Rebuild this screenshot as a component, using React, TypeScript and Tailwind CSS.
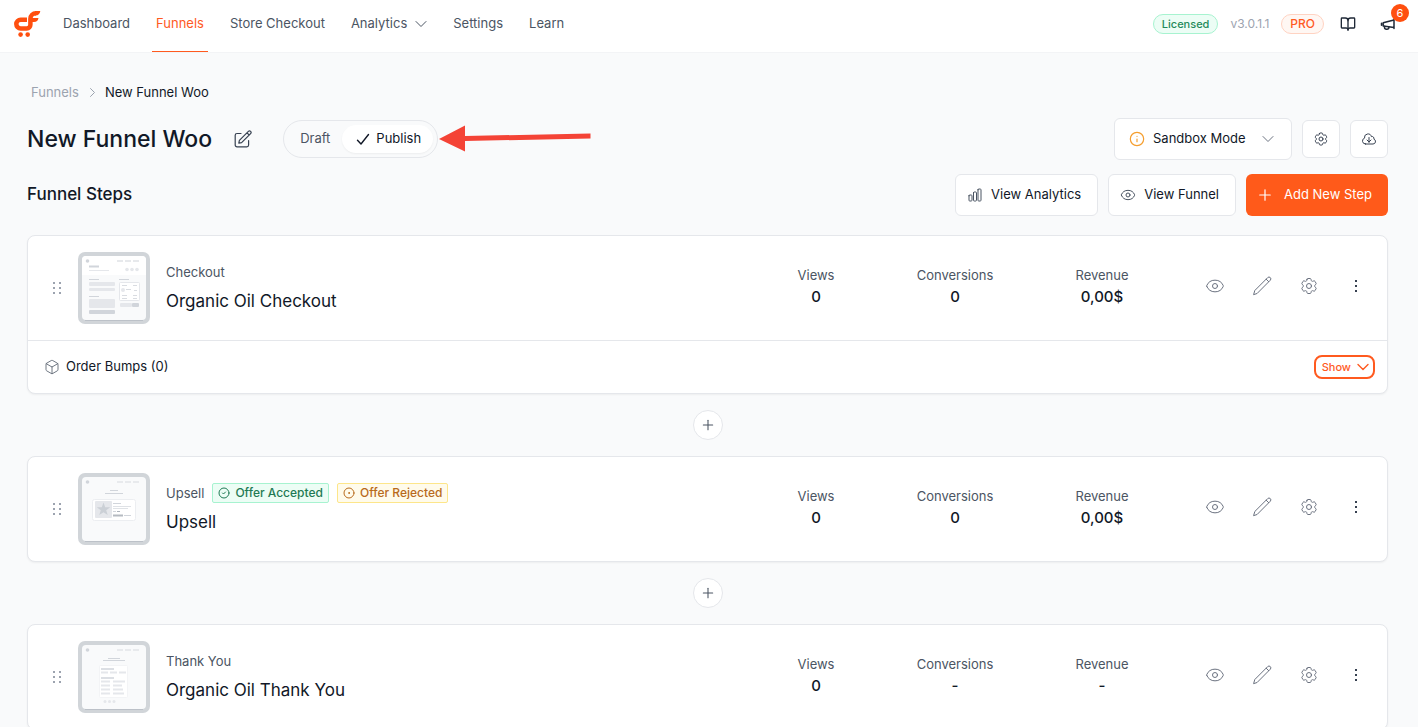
import { ReactNode, useState } from 'react'
import { BookOpen, Box, CircleCheck, CircleDot, Eye, Info, Plus } from 'lucide-react'
import { HiOutlineChartBar, HiOutlineCloudArrowDown, HiOutlineCog6Tooth } from 'react-icons/hi2'

type StepType = 'checkout' | 'upsell' | 'thankyou'

type Step = {
  type: StepType
  label: string
  title: string
  views: string
  conversions: string
  revenue: string
}

const steps: Step[] = [
  { type: 'checkout', label: 'Checkout', title: 'Organic Oil Checkout', views: '0', conversions: '0', revenue: '0,00$' },
  { type: 'upsell', label: 'Upsell', title: 'Upsell', views: '0', conversions: '0', revenue: '0,00$' },
  { type: 'thankyou', label: 'Thank You', title: 'Organic Oil Thank You', views: '0', conversions: '-', revenue: '-' },
]

const navItems = ['Dashboard', 'Funnels', 'Store Checkout', 'Analytics', 'Settings', 'Learn']

const Logo = () => (
  <svg width="28" height="28" viewBox="0 0 28 28" fill="none" aria-hidden="true">
    <path d="M14 9.800H7.600a4.300 4.300 0 0 0 0 8.600h6.200a3.600 3.600 0 0 0 3.600-3.600V8.800a5.600 5.600 0 0 1 5.600-5.600" stroke="#ff4f0f" strokeWidth="4.500" />
    <path d="M22 1h5.300c-.4 2.900-2 4.500-4.700 4.500H22zM17 8h8.500c-.4 2.700-1.900 4-4.500 4h-4z" fill="#ff4f0f" />
    <circle cx="7.600" cy="24.600" r="2.300" fill="#ff4f0f" />
    <circle cx="14.700" cy="24.600" r="2.300" fill="#ff4f0f" />
  </svg>
)

const Chevron = ({ className }: { className?: string }) => (
  <svg
    width="12"
    height="12"
    viewBox="0 0 12 12"
    fill="none"
    stroke="currentColor"
    strokeLinecap="round"
    strokeLinejoin="round"
    className={`pointer-events-none shrink-0 ${className ?? ''}`}
  >
    <path d="m1 3.500 5 5 5-5" />
  </svg>
)

const CheckIcon = () => (
  <svg width="14" height="14" viewBox="0 0 14 14" fill="none" stroke="currentColor" strokeWidth="1.400" strokeLinecap="round" strokeLinejoin="round">
    <path d="m1.500 8.200 3.500 3.800 7.500-9.500" />
  </svg>
)

const MegaphoneIcon = () => (
  <svg width="16" height="16" viewBox="0 0 16 16" fill="none" stroke="currentColor" strokeWidth="1.500" strokeLinejoin="round" strokeLinecap="round">
    <path d="M14 3v9.500M14 4 3.200 6.700v3.200L14 11.600M1.500 7.300v2" />
    <path d="M4.500 10.200v1.100a2 2 0 0 0 2 2h.4a2 2 0 0 0 2-2v-.4" />
  </svg>
)

const EditIcon = () => (
  <svg width="18" height="18" viewBox="0 0 18 18" fill="none" stroke="currentColor" strokeWidth="1.200" strokeLinejoin="round" strokeLinecap="round">
    <path d="M7 3.500H3A1.800 1.800 0 0 0 1.200 5.300V15A1.800 1.800 0 0 0 3 16.800h9.800a1.800 1.800 0 0 0 1.800-1.800v-4.500" />
    <path d="m4.800 13.200.6-2.800 9-9a1.500 1.500 0 0 1 2.200 2.200l-9 9zM13 2.800 15.200 5" />
  </svg>
)

const PencilIcon = () => (
  <svg width="20" height="20" viewBox="0 0 20 20" fill="none" stroke="currentColor" strokeLinejoin="round" strokeLinecap="round">
    <path d="m1.700 18.300 1.100-3.800L15.700 1.600a1.700 1.700 0 0 1 2.600 2.600L5.400 17.200zM14.200 3.200l2.500 2.500" />
  </svg>
)

const DragHandle = () => (
  <svg width="10" height="14" viewBox="0 0 10 14" fill="#9ca3af">
    {[1, 6, 11].map((y) => (
      <path key={y} d={`M1 ${y}h2v2H1zM7 ${y}h2v2H7z`} />
    ))}
  </svg>
)

const Thumbnail = ({ type }: { type: StepType }) => (
  <svg width="72" height="72" viewBox="0 0 72 72" aria-hidden="true" className="shrink-0">
    <rect width="72" height="72" rx="7" fill="#d1d5d9" />
    <rect x="4" y="4" width="64" height="64" rx="4" fill="#f9fafb" />
    <path d="M7 68.500h58" stroke="#bcc1c8" />
    <circle cx="9.500" cy="9" r="1.800" fill="#d1d5db" />
    <path d="M39 9h6M47 9h6M55 9h6" stroke="#e2e5e9" strokeWidth="1.500" />
    {type === 'checkout' && (
      <g>
        <path d="M4 8a4 4 0 0 1 4-4h56a4 4 0 0 1 4 4v15H4z" fill="#fff" />
        <circle cx="9.500" cy="9" r="1.800" fill="#d1d5db" />
        <path d="M39 9h6M47 9h6M55 9h6" stroke="#dfe2e6" strokeWidth="1.500" />
        <path d="M11 14.500h10" stroke="#d1d5db" strokeWidth="2" />
        <path d="M11 18.500h20" stroke="#e5e7eb" strokeWidth="1" />
        <g fill="#e5e7eb">
          <circle cx="49" cy="17.500" r="1.800" />
          <circle cx="54" cy="17.500" r="1.800" />
          <circle cx="59" cy="17.500" r="1.800" />
          <rect x="11" y="30" width="26" height="4" rx="1" />
          <rect x="11" y="36" width="26" height="3" rx="1" />
          <rect x="11" y="47" width="26" height="9" rx="1" />
          <rect x="42" y="51" width="12" height="4" rx="1" />
        </g>
        <rect x="11" y="58" width="26" height="4" rx="1" fill="#d1d5db" />
        <rect x="54" y="51" width="7" height="4" rx="1" fill="#d1d5db" />
        <path d="M11 27.500h10M41 27.500h10M11 44.500h10" stroke="#d1d5db" />
        <rect x="41.500" y="30.500" width="20" height="18" rx="1" fill="#fff" stroke="#e5e7eb" />
        <circle cx="45" cy="38" r="2" fill="#e5e7eb" />
        <path d="M44 33.500h5M55 33.500h4M48 37.500h5M56 38.500h3M44 43.500h5M55 43.500h4M44 46.500h5M55 46.500h4" stroke="#d9dce1" />
      </g>
    )}
    {type === 'upsell' && (
      <g>
        <path d="M32 17.500h8M27 20.500h18" stroke="#d1d5db" />
        <rect x="14.500" y="26.500" width="43" height="21" rx="2" fill="#fff" stroke="#eceef1" />
        <rect x="17" y="28" width="17" height="17" rx="1" fill="#e5e7eb" />
        <path d="m25.500 29.500 1.700 4.700 5 .1-4 3 1.500 4.800-4.200-2.900-4.200 2.900 1.500-4.800-4-3 5-.1z" fill="#cbd0d6" />
        <path d="M35 30.500h8M35 38.500h3M46 42.500h7" stroke="#d1d5db" />
        <path d="M35 33.500h18M35 35.500h15" stroke="#dfe2e6" />
        <path d="M39 38.500h3" stroke="#aeb4bc" />
        <path d="M35 42.500h10" stroke="#b5bac1" strokeWidth="2" />
      </g>
    )}
    {type === 'thankyou' && (
      <g>
        <path d="M30 17.500h12M25 19.500h22" stroke="#d1d5db" />
        <rect x="21.500" y="24.500" width="28" height="32" rx="1" fill="#fff" stroke="#f3f4f6" />
        <path d="M23 28h13M23 37h13" stroke="#d1d5db" strokeWidth="1.500" />
        <path
          d="M23 31.500h7M32 31.500h7M41 31.500h7M23 40.500h9M35 40.500h12M23 44.500h9M35 44.500h9M23 48.500h9M35 48.500h10M23 52.500h9M35 52.500h11"
          stroke="#e5e7eb"
          strokeWidth="2"
        />
        <circle cx="27" cy="60.500" r="1.500" fill="#e5e7eb" />
        <circle cx="31.500" cy="60.500" r="1.500" fill="#e5e7eb" />
        <circle cx="36" cy="60.500" r="1.500" fill="#e5e7eb" />
      </g>
    )}
  </svg>
)

const Header = () => (
  <header className="flex h-[53px] items-stretch border-b border-gray-100 bg-white pr-[22px] pl-[13px]">
    <a href="#" aria-label="Home" className="mr-[18px] flex items-center pb-1">
      <Logo />
    </a>
    <nav className="flex gap-[18px] text-[13px] text-[#4b5563]">
      {navItems.map((item) => (
        <a
          key={item}
          href="#"
          className={
            item === 'Funnels'
              ? 'flex items-center border-b border-[#ff5a1f] px-1 pb-1 text-[#ff5a1f]'
              : 'flex items-center gap-2 px-1 pb-1'
          }
        >
          {item}
          {item === 'Analytics' && <Chevron />}
        </a>
      ))}
    </nav>
    <div className="ml-auto flex items-center pb-1 text-xs">
      <span className="rounded-full border border-[#a7f3d0] bg-[#ecfdf5] px-2 text-[11px] leading-[18px] font-medium text-[#1f8a5b]">Licensed</span>
      <span className="ml-3 text-[#9ca3af]">v3.0.1.1</span>
      <span className="ml-3 rounded-full border border-[#ffd3c2] bg-[#fff7f3] px-2 leading-[18px] font-medium text-[#ff5a1f]">PRO</span>
      <button aria-label="Documentation" className="ml-4 text-[#1f2937]">
        <BookOpen size={16} strokeWidth={2} />
      </button>
      <button aria-label="What's new" className="relative ml-6 text-[#1f2937]">
        <MegaphoneIcon />
        <span className="absolute -top-3 left-[11px] flex size-[18px] items-center justify-center rounded-full bg-[#ff4f0f] text-[11px] text-white">
          6
        </span>
      </button>
    </div>
  </header>
)

const StatusToggle = () => {
  const [status, setStatus] = useState('Publish')

  return (
    <div className="ml-[31px] flex h-[38px] items-center rounded-full border border-gray-200 p-1 text-[13px]">
      {['Draft', 'Publish'].map((name) => (
        <button
          key={name}
          aria-pressed={status === name}
          onClick={() => setStatus(name)}
          className={
            status === name
              ? 'flex h-7 items-center gap-[6px] rounded-full bg-white pr-3 pl-[14px] text-[#111827] shadow-xs'
              : 'flex h-7 items-center px-3 text-[#4b5563]'
          }
        >
          {status === name && <CheckIcon />}
          {name}
        </button>
      ))}
    </div>
  )
}

const PointerArrow = () => (
  <svg width="153" height="32" viewBox="0 0 153 32" fill="#f44336" aria-hidden="true" className="ml-px">
    <path d="M0 16 26 2.500v10.500l125.500-2.500v5L26 18v10.500z" />
  </svg>
)

const Stat = ({ label, value, className }: { label: string; value: string; className: string }) => (
  <div className={`text-center ${className}`}>
    <div className="text-[13px] leading-[22px] whitespace-nowrap text-[#4b5563]">{label}</div>
    <div className="text-[15px] leading-[22px] font-medium text-[#111827]">{value}</div>
  </div>
)

const StepCard = ({ step, children }: { step: Step; children?: ReactNode }) => (
  <div className="w-full rounded-lg border border-gray-200 bg-white shadow-xs">
    <div className="flex items-center py-4 pr-[21px] pl-6">
      <button aria-label="Reorder step" className="mr-4">
        <DragHandle />
      </button>
      <Thumbnail type={step.type} />
      <div className="ml-4 flex flex-col gap-[5px]">
        <div className="flex items-center gap-2 text-[13px] leading-5 text-[#4b5563]">
          {step.label}
          {step.type === 'upsell' && (
            <>
              <span className="flex items-center gap-[5px] rounded-xs border border-[#a7f3d0] bg-[#ecfdf5] px-[5px] text-xs leading-[18px] font-medium text-[#1f7a54]">
                <CircleCheck size={12} /> Offer Accepted
              </span>
              <span className="flex items-center gap-[5px] rounded-xs border border-[#fde68a] bg-[#fffbeb] px-[5px] text-xs leading-[18px] font-medium text-[#b86a1c]">
                <CircleDot size={12} /> Offer Rejected
              </span>
            </>
          )}
        </div>
        <h3 className="text-[17px] leading-7 text-[#111827]">{step.title}</h3>
      </div>
      <div className="ml-auto flex items-center pb-1">
        <div className="flex gap-[79px]">
          <Stat label="Views" value={step.views} className="w-10" />
          <Stat label="Conversions" value={step.conversions} className="w-20" />
          <Stat label="Revenue" value={step.revenue} className="w-14" />
        </div>
        <div className="ml-[75px] flex items-center gap-[27px] text-[#6b7280]">
          <button aria-label="Preview"><Eye size={20} strokeWidth={1.2} /></button>
          <button aria-label="Edit"><PencilIcon /></button>
          <button aria-label="Step settings"><HiOutlineCog6Tooth size={20} strokeWidth={1.2} /></button>
          <button aria-label="More options">
            <svg width="20" height="20" viewBox="0 0 20 20" fill="#374151">
              <path d="M9 4h2v2H9zM9 9h2v2H9zM9 14h2v2H9z" />
            </svg>
          </button>
        </div>
      </div>
    </div>
    {children}
  </div>
)

const OrderBumps = () => (
  <div className="flex h-[53px] items-center border-t border-gray-200 pr-3 pl-4">
    <Box size={16} strokeWidth={1.2} className="text-[#4b5563]" />
    <span className="ml-[6px] text-[13px] text-[#111827]">Order Bumps (0)</span>
    <button className="ml-auto flex h-6 items-center gap-[6px] rounded-lg border-2 border-[#ff5a1f] pr-1 pl-[6px] text-[11px] font-medium text-[#ff5a1f]">
      Show <Chevron className="stroke-[1.4]" />
    </button>
  </div>
)

export default function App() {
  const outlined = 'flex h-[42px] items-center gap-2 rounded-md border border-gray-200 bg-white pr-4 pl-[11px]'

  return (
    <div className="h-screen overflow-hidden bg-[#f9fafb] font-['Inter',sans-serif] text-[#111827]">
      <Header />
      <main className="pt-[29px] pr-[30px] pl-[27px]">
        <div className="flex items-center gap-[7px] pl-1 text-[13px] leading-5">
          <a href="#" className="text-[#9ca3af]">Funnels</a>
          <svg width="12" height="12" viewBox="0 0 12 12" fill="none" stroke="#9ca3af" strokeLinecap="round" strokeLinejoin="round">
            <path d="m4.500 2.500 4 4-4 4" />
          </svg>
          <span>New Funnel Woo</span>
        </div>

        <div className="mt-4 flex h-[42px] items-center">
          <h1 className="text-[23px] font-medium">New Funnel Woo</h1>
          <button aria-label="Rename funnel" className="ml-[22px] text-[#374151]">
            <EditIcon />
          </button>
          <StatusToggle />
          <PointerArrow />
          <div className="ml-auto flex items-center gap-[10px] text-[#374151]">
            <label className="flex h-[42px] w-[178px] items-center rounded-md border border-gray-200 bg-white pr-[17px] pl-[14px]">
              <Info size={16} strokeWidth={1.8} className="text-[#f59e2e]" />
              <select aria-label="Mode" className="ml-2 w-0 grow appearance-none text-[13px] text-[#111827] outline-none">
                <option>Sandbox Mode</option>
              </select>
              <Chevron className="text-[#6b7280]" />
            </label>
            <button aria-label="Funnel settings" className="flex size-[38px] items-center justify-center rounded-md border border-gray-200 bg-white">
              <HiOutlineCog6Tooth size={16} />
            </button>
            <button aria-label="Export funnel" className="flex size-[38px] items-center justify-center rounded-md border border-gray-200 bg-white">
              <HiOutlineCloudArrowDown size={16} />
            </button>
          </div>
        </div>

        <div className="mt-[14px] flex items-center">
          <h2 className="text-[17px] font-medium">Funnel Steps</h2>
          <div className="ml-auto flex gap-[10px] text-[13px]">
            <button className={outlined}>
              <HiOutlineChartBar size={16} className="text-[#4b5563]" /> View Analytics
            </button>
            <button className={outlined}>
              <Eye size={16} strokeWidth={1.5} className="text-[#4b5563]" /> View Funnel
            </button>
            <button className="flex h-[42px] items-center gap-[10px] rounded-md bg-[#ff5a1a] pr-4 pl-[10px] text-white">
              <Plus size={18} strokeWidth={1.6} /> Add New Step
            </button>
          </div>
        </div>

        <div className="mt-[19px] flex flex-col items-center gap-4">
          {steps.map((step, i) => (
            <div key={step.title} className="flex w-full flex-col items-center gap-4">
              {i > 0 && (
                <button aria-label="Insert step" className="flex size-[30px] items-center justify-center rounded-full border border-gray-200 bg-white text-[#4b5563]">
                  <Plus size={16} strokeWidth={1.6} />
                </button>
              )}
              <StepCard step={step}>{step.type === 'checkout' && <OrderBumps />}</StepCard>
            </div>
          ))}
        </div>
      </main>
    </div>
  )
}
